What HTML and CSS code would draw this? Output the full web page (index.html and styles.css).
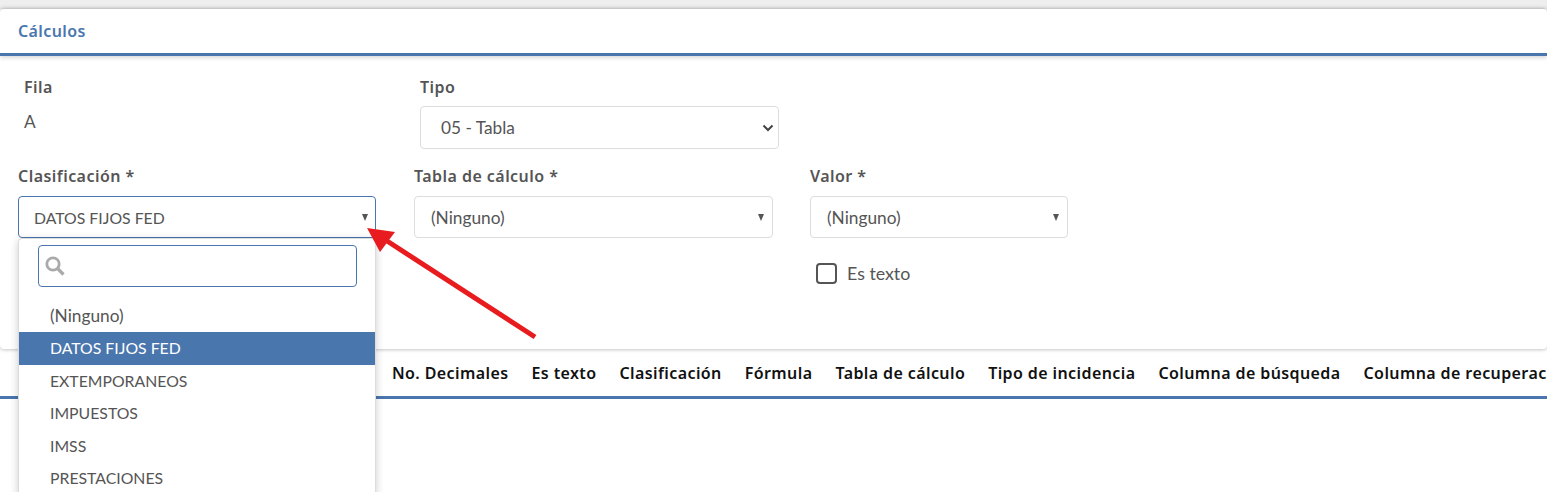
FILE: index.html
```html
<!DOCTYPE html>
<html>
<head>
    <title>Cálculos</title>
    <link rel="stylesheet" href="styles.css">
</head>
<body>
    <div class="top-strip"></div>
    <div class="card">
        <div class="card-header">Cálculos</div>
        <div class="form-row first-row">
            <div class="field">
                <label>Fila</label>
                <div class="static-value">A</div>
            </div>
            <div class="field wide">
                <label>Tipo</label>
                <div class="select native-select">
                    <span>05 - Tabla</span>
                    <svg class="chevron" width="12" height="8" viewBox="0 0 12 8"><path d="M1.5 1.5l4.5 4.5 4.5-4.5" fill="none" stroke="#444" stroke-width="2"/></svg>
                </div>
            </div>
        </div>
        <div class="form-row">
            <div class="field">
                <label>Clasificación *</label>
                <div class="select active-select">
                    <span class="caps">DATOS FIJOS FED</span>
                    <i class="caret"></i>
                </div>
            </div>
            <div class="field wide">
                <label>Tabla de cálculo *</label>
                <div class="select">
                    <span>(Ninguno)</span>
                    <i class="caret"></i>
                </div>
            </div>
            <div class="field narrow">
                <label>Valor *</label>
                <div class="select">
                    <span>(Ninguno)</span>
                    <i class="caret"></i>
                </div>
                <div class="checkbox-row">
                    <span class="checkbox"></span>
                    <span>Es texto</span>
                </div>
            </div>
        </div>
    </div>

    <div class="table-head">
        <span>No. Decimales</span>
        <span>Es texto</span>
        <span>Clasificación</span>
        <span>Fórmula</span>
        <span>Tabla de cálculo</span>
        <span>Tipo de incidencia</span>
        <span>Columna de búsqueda</span>
        <span>Columna de recuperación</span>
    </div>

    <!-- open dropdown, sits over the card and the table -->
    <div class="dropdown">
        <div class="search-box">
            <svg width="22" height="22" viewBox="0 0 22 22"><circle cx="9" cy="9" r="6.2" fill="none" stroke="#aaa" stroke-width="2.8"/><path d="M13.5 13.5l6 6" stroke="#aaa" stroke-width="3.2"/></svg>
        </div>
        <ul class="options">
            <li>(Ninguno)</li>
            <li class="selected caps">DATOS FIJOS FED</li>
            <li class="caps">EXTEMPORANEOS</li>
            <li class="caps">IMPUESTOS</li>
            <li class="caps">IMSS</li>
            <li class="caps">PRESTACIONES</li>
        </ul>
    </div>

    <svg class="arrow" width="190" height="125" viewBox="0 0 190 125">
        <path d="M168 109L17 11" stroke="#e81c1e" stroke-width="5" fill="none"/>
        <path d="M0 0L28 4L13 24Z" fill="#e81c1e"/>
    </svg>
</body>
</html>
```

FILE: styles.css
```css
/* Basic styling */
html, body {
    margin: 0;
    height: 100%;
    overflow: hidden;
}
body {
    position: relative;
    background-color: #fff;
    font-family: "Lato", "Noto Sans", sans-serif;
    font-size: 17.3px;
    color: #555;
}
.top-strip {
    height: 9px;
    background-color: #eee;
}
.card {
    height: 340px;
    box-sizing: border-box;
    border-radius: 4px;
    background-color: #fff;
    box-shadow: 0 0 4px rgba(0, 0, 0, 0.35);
}
.card-header {
    height: 47px;
    box-sizing: border-box;
    padding: 11px 18px 0;
    border-bottom: 3px solid #4a76ae;
    box-shadow: 0 2px 4px rgba(0, 0, 0, 0.15);
    font-family: "Noto Sans", sans-serif;
    font-size: 16px;
    font-weight: 600;
    letter-spacing: 0.4px;
    line-height: 22px;
    color: #4a76ae;
}
.form-row {
    display: flex;
    gap: 38px;
    padding: 0 18px;
    margin-top: 18px;
}
.form-row.first-row {
    height: 73px;
    margin-top: 0;
    padding: 20px 24px 0;
}
.field {
    width: 358px;
}
.field.wide {
    width: 359px;
    margin-right: -1px;
}
.field.narrow {
    width: 258px;
}
label {
    display: block;
    height: 31px;
    margin-top: -2px;
    font-family: "Noto Sans", sans-serif;
    font-size: 16px;
    font-weight: 600;
    letter-spacing: 0.45px;
    line-height: 22px;
    color: #555;
}
.first-row label {
    height: 30px;
    margin-top: 0;
}
.static-value {
    line-height: 32px;
}
.select {
    display: flex;
    justify-content: space-between;
    align-items: center;
    height: 42px;
    box-sizing: border-box;
    padding: 0 16px;
    border: 1px solid #ddd;
    border-radius: 4px;
    background-color: #fff;
}
.native-select {
    height: 43px;
    padding: 0 4px 0 20px;
}
.active-select {
    padding-left: 15px;
    border-color: #4a76ae;
}
.caps {
    font-size: 15.8px;
}
.caret {
    margin-right: -8px;
    border-left: 3px solid transparent;
    border-right: 3px solid transparent;
    border-top: 7px solid #555;
}
.active-select .caret {
    margin-right: -9px;
}
.checkbox-row {
    display: flex;
    align-items: center;
    gap: 10px;
    margin: 24px 0 0 6px;
    font-size: 17.8px;
}
.checkbox {
    width: 17px;
    height: 17px;
    border: 2px solid #555;
    border-radius: 4px;
}
.table-head {
    display: flex;
    gap: 23px;
    height: 50px;
    box-sizing: border-box;
    padding: 13px 0 0 392px;
    border-bottom: 3px solid #4a76ae;
    font-family: "Noto Sans", sans-serif;
    font-size: 16px;
    font-weight: 600;
    letter-spacing: 0.4px;
    line-height: 22px;
    color: #111;
    white-space: nowrap;
}
.dropdown {
    position: absolute;
    left: 18px;
    top: 238px;
    width: 358px;
    height: 270px;
    box-sizing: border-box;
    padding-top: 6px;
    background-color: #fff;
    border: 1px solid #ddd;
    border-radius: 4px 4px 0 0;
    box-shadow: 0 2px 8px rgba(0, 0, 0, 0.2);
}
.search-box {
    display: flex;
    align-items: center;
    height: 42px;
    box-sizing: border-box;
    margin: 0 18px 0 19px;
    padding-left: 5px;
    border: 1px solid #4a76ae;
    border-radius: 4px;
}
.options {
    list-style: none;
    margin: 12px 0 0;
    padding: 0;
}
.options li {
    height: 32.5px;
    line-height: 32.5px;
    padding-left: 31px;
}
.options li:first-child {
    line-height: 34px;
}
.options .selected {
    height: 33px;
    background-color: #4a76ae;
    color: #fff;
}
.arrow {
    position: absolute;
    left: 367px;
    top: 228px;
}
```
